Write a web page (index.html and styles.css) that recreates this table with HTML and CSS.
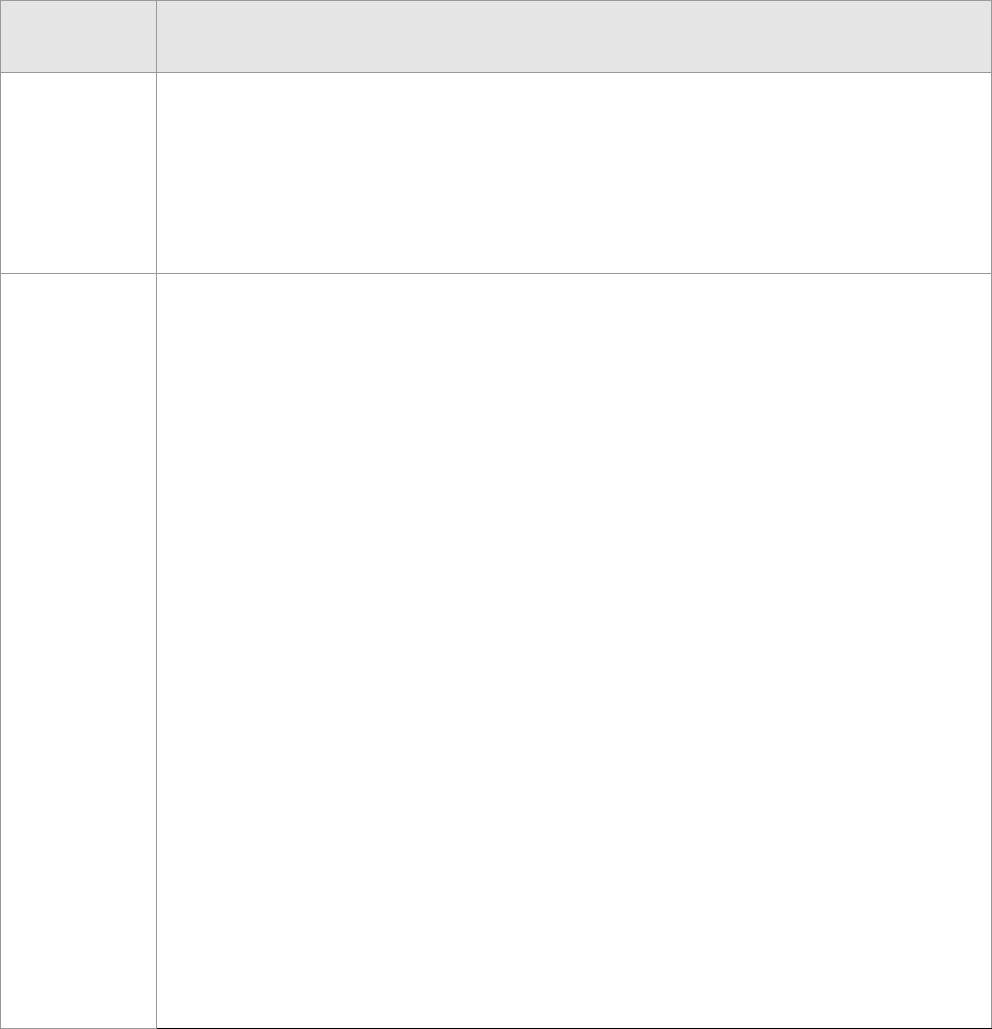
FILE: index.html
```html
<!DOCTYPE html>
<html lang="en">
<head>
    <meta charset="UTF-8">
    <meta name="viewport" content="width=device-width, initial-scale=1.0">
    <title>Table</title>
    <link rel="stylesheet" href="styles.css">
</head>
<body>

<table class="grid">
    <colgroup>
        <col class="col-label">
        <col class="col-value">
    </colgroup>
    <thead>
        <tr class="head-row">
            <th></th>
            <th></th>
        </tr>
    </thead>
    <tbody>
        <tr class="row-short">
            <td></td>
            <td></td>
        </tr>
        <tr class="row-tall">
            <td></td>
            <td class="last-cell"></td>
        </tr>
    </tbody>
</table>

</body>
</html>
```

FILE: styles.css
```css
body {
    margin: 0;
    font-family: "Liberation Sans", Arial, sans-serif;
    background-color: #fff;
}
.grid {
    border-collapse: collapse;
    table-layout: fixed;
    width: 992px;
}
.col-label {
    width: 156px;
}
.grid th, .grid td {
    border: 1px solid #999;
    padding: 0;
}
.grid th {
    background-color: #e5e5e5;
}
.head-row {
    height: 72px;
}
.row-short {
    height: 201px;
}
.row-tall {
    height: 755px;
}
.grid .last-cell {
    border-bottom-color: #000;
}
```
